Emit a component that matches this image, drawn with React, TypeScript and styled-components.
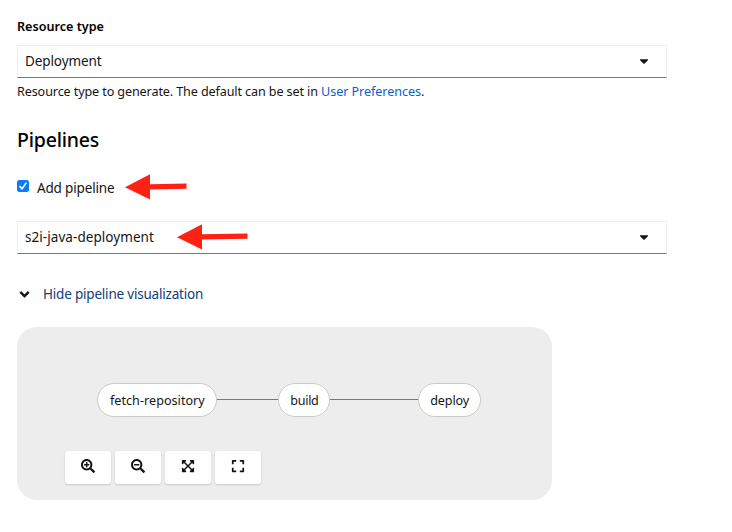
import React from "react";
import styled, { createGlobalStyle } from "styled-components";
import { FaAngleDown, FaCaretDown, FaExpand, FaExpandArrowsAlt, FaSearchMinus, FaSearchPlus } from "react-icons/fa";

const GlobalStyle = createGlobalStyle`
  *, *::before, *::after { box-sizing: border-box; }
  body {
    margin: 0;
    background: #fff;
    color: #151515;
    font-family: "Noto Sans", sans-serif;
    font-size: 13.5px;
    overflow: hidden;
  }
`;

const Page = styled.main`
  display: flex;
  flex-direction: column;
  align-items: flex-start;
  height: 532px;
  padding: 17px 0 0 17px;
`;

const Label = styled.label`
  height: 28px;
  font-size: 12.6px;
  font-weight: 600;
  line-height: 19px;
  color: #000;
`;

const Select = styled.button`
  display: flex;
  align-items: center;
  justify-content: space-between;
  flex: none;
  width: 650px;
  height: 33px;
  padding: 0 17px 1px 7px;
  border: 1px solid #ededed;
  border-bottom-color: #75777a;
  background: #fff;
  color: #151515;
  font: inherit;
  line-height: 20px;

  > svg { width: 10px; height: 14px; }
`;

const Value = styled.span<{ $spacing: number }>`
  display: flex;
  align-items: center;
  height: 20px;
  letter-spacing: ${(p) => p.$spacing}px;
`;

const HelpText = styled.p`
  margin: 4px 0 0;
  font-size: 12.6px;
  line-height: 19px;
  letter-spacing: -0.115px;
  white-space: pre;
`;

const Link = styled.a`
  color: #0a60cc;
  letter-spacing: -0.06px;
  text-decoration: none;
`;

const Heading = styled.h2`
  margin: 24px 0 0;
  height: 30px;
  font-size: 19.5px;
  font-weight: 500;
  line-height: 30px;
  letter-spacing: -0.2px;
  color: #000;
`;

const CheckRow = styled.div`
  display: flex;
  align-items: center;
  height: 22px;
  margin: 21px 0 23px;
`;

const CheckBox = styled.span`
  display: flex;
  align-items: center;
  justify-content: center;
  width: 12px;
  height: 12px;
  margin: 0 8px 2px 0;
  border-radius: 2.5px;
  background: #087bff;
`;

const CheckText = styled.span`
  margin-top: 2px;
  line-height: 20px;
  letter-spacing: -0.16px;
`;

const Arrow = styled.svg<{ $gap: number; $length: number }>`
  width: ${(p) => p.$length}px;
  height: 26px;
  margin-left: ${(p) => p.$gap}px;
  flex: none;
  fill: #ff2114;
`;

const Toggle = styled.button`
  display: flex;
  align-items: center;
  height: 22px;
  margin: 29px 0 22px;
  padding: 0 0 0 2px;
  border: 0;
  background: none;
  color: #10407c;
  font: inherit;
  letter-spacing: -0.2px;

  svg { width: 11px; height: 15px; margin-right: 13px; color: #151515; stroke: #151515; stroke-width: 10px; }
`;

const Panel = styled.section`
  display: flex;
  flex-direction: column;
  justify-content: space-between;
  width: 535px;
  height: 173px;
  padding: 56px 48px 16px;
  border-radius: 20px;
  background: #ededed;
`;

const Graph = styled.div`
  display: flex;
  align-items: center;
  padding-left: 32.4px;
`;

const Node = styled.div<{ $width: number; $spacing: number }>`
  display: flex;
  align-items: center;
  justify-content: center;
  width: ${(p) => p.$width}px;
  height: 34px;
  padding-top: 2px;
  border: 1px solid #cacaca;
  border-radius: 17px;
  background: #fff;
  font-size: 12.6px;
  line-height: 18px;
  letter-spacing: ${(p) => p.$spacing}px;
`;

const Edge = styled.div<{ $width: number }>`
  width: ${(p) => p.$width}px;
  height: 1px;
  margin-bottom: 1px;
  background: #77797c;
`;

const Controls = styled.div`
  display: flex;
  gap: 4px;
`;

const Control = styled.button`
  display: flex;
  align-items: center;
  justify-content: center;
  width: 46px;
  height: 33px;
  padding: 0 0 3px;
  border: 0;
  border-radius: 3px;
  background: #fff;
  color: #151515;
  box-shadow: 0 1px 2px rgba(3, 3, 3, 0.16);

  svg { width: 14px; height: 14px; }
`;

function PointerArrow({ gap, length }: { gap: number; length: number }) {
  const tail = length - 0.5;
  return (
    <Arrow $gap={gap} $length={length} viewBox={`0 0 ${length} 26`} aria-hidden="true">
      <path d={`M0 13.2 25 .3V10.2L${tail} 9.5v5.3L25 15.6v9.8Z`} />
    </Arrow>
  );
}

export default function App() {
  return (
    <>
      <GlobalStyle />
      <Page>
        <Label>Resource type</Label>
        <Select>
          <Value $spacing={-0.1}>Deployment</Value>
          <FaCaretDown />
        </Select>
        <HelpText>
          Resource type to generate. The default can be set in <Link>User Preferences</Link>.
        </HelpText>
        <Heading>Pipelines</Heading>
        <CheckRow>
          <CheckBox>
            <svg width="12" height="12" viewBox="0 0 12 12" fill="none" stroke="#fff" strokeWidth="1.7" strokeLinecap="round" strokeLinejoin="round">
              <path d="m3 6.5 2.1 2.4L9 3.1" />
            </svg>
          </CheckBox>
          <CheckText>Add pipeline</CheckText>
          <PointerArrow gap={11} length={62} />
        </CheckRow>
        <Select>
          <Value $spacing={0.06}>
            s2i-java-deployment
            <PointerArrow gap={23} length={71} />
          </Value>
          <FaCaretDown />
        </Select>
        <Toggle>
          <FaAngleDown />
          Hide pipeline visualization
        </Toggle>
        <Panel>
          <Graph>
            <Node $width={120} $spacing={0.03}>fetch-repository</Node>
            <Edge $width={61} />
            <Node $width={52} $spacing={-0.3}>build</Node>
            <Edge $width={87.6} />
            <Node $width={63.4} $spacing={-0.1}>deploy</Node>
          </Graph>
          <Controls>
            <Control aria-label="Zoom in"><FaSearchPlus /></Control>
            <Control aria-label="Zoom out"><FaSearchMinus /></Control>
            <Control aria-label="Fit to screen"><FaExpandArrowsAlt /></Control>
            <Control aria-label="Reset view"><FaExpand /></Control>
          </Controls>
        </Panel>
      </Page>
    </>
  );
}
